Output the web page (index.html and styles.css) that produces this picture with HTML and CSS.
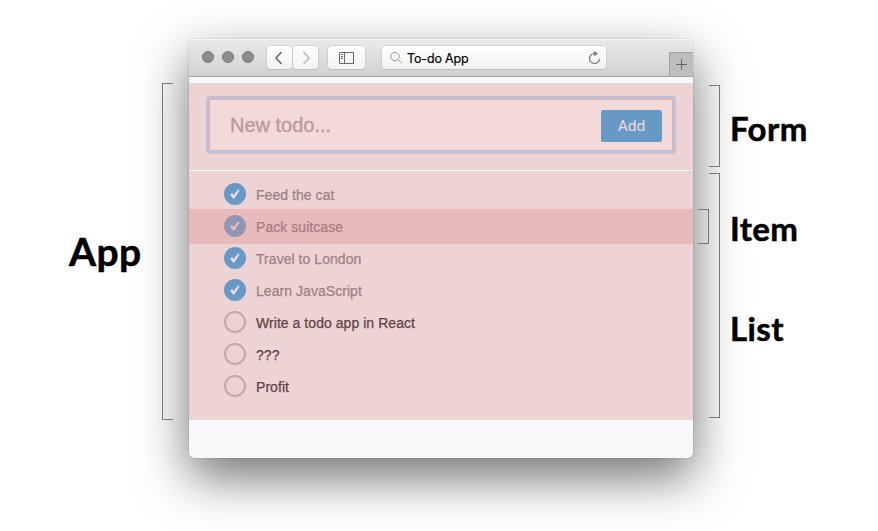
FILE: index.html
```html
<!DOCTYPE html>
<html lang="en">
<head>
<meta charset="utf-8">
<title>To-do App</title>
<link rel="stylesheet" href="styles.css">
</head>
<body>
<main class="figure">
  <div class="label label-app">App</div>
  <div class="bracket bracket-app"></div>
  <section class="window">
    <header class="toolbar">
      <div class="lights"><i></i><i></i><i></i></div>
      <div class="nav">
        <span class="btn back"><svg width="10" height="14" viewBox="0 0 10 14"><path d="M7.500 1 2 7l5.500 6"/></svg></span>
        <span class="btn forward"><svg width="10" height="14" viewBox="0 0 10 14"><path d="M2.500 1 8 7l-5.500 6"/></svg></span>
      </div>
      <span class="btn sidebar"><svg width="15" height="12" viewBox="0 0 15 12"><path d="M.5.5h14v11H.5zM5.500.5v11M2 2.500h2M2 4.500h2M2 6.500h2"/></svg></span>
      <div class="address">
        <svg class="search" width="13" height="13" viewBox="0 0 13 13"><circle cx="5" cy="5.500" r="4.200"/><path d="m8.200 8.700 3.600 3.600"/></svg>
        <span class="title">To-do App</span>
        <svg class="reload" width="13" height="14" viewBox="0 0 13 14"><path d="M6.500 2.500A5 5 0 1 0 11.500 7.800"/><path class="tip" d="M5.800 0v5.200L10 2.600z"/></svg>
      </div>
      <span class="newtab"><svg width="11" height="11" viewBox="0 0 11 11"><path d="M5.500 0v11M0 5.500h11"/></svg></span>
    </header>
    <div class="form">
      <div class="field"><span class="placeholder">New todo...</span><span class="add">Add</span></div>
    </div>
    <ul class="list">
      <li class="item done"><span class="check"><svg width="10" height="10" viewBox="0 0 10 10"><path d="M.2 5.200 2.200 4.200 3.600 6 7.800.8l1.900.2L4.600 9.200H2.400z"/></svg></span>Feed the cat</li>
      <li class="item done active"><span class="check"><svg width="10" height="10" viewBox="0 0 10 10"><path d="M.2 5.200 2.200 4.200 3.600 6 7.800.8l1.900.2L4.600 9.200H2.400z"/></svg></span>Pack suitcase</li>
      <li class="item done"><span class="check"><svg width="10" height="10" viewBox="0 0 10 10"><path d="M.2 5.200 2.200 4.200 3.600 6 7.800.8l1.900.2L4.600 9.200H2.400z"/></svg></span>Travel to London</li>
      <li class="item done"><span class="check"><svg width="10" height="10" viewBox="0 0 10 10"><path d="M.2 5.200 2.200 4.200 3.600 6 7.800.8l1.900.2L4.600 9.200H2.400z"/></svg></span>Learn JavaScript</li>
      <li class="item"><span class="check"></span>Write a todo app in React</li>
      <li class="item"><span class="check"></span>???</li>
      <li class="item"><span class="check"></span>Profit</li>
    </ul>
  </section>
  <div class="bracket bracket-item"></div>
  <div class="brackets">
    <div class="bracket bracket-form"></div>
    <div class="bracket bracket-list"></div>
  </div>
  <div class="labels">
    <div class="label label-form">Form</div>
    <div class="label label-item">Item</div>
    <div class="label label-list">List</div>
  </div>
</main>
</body>
</html>
```
FILE: styles.css
```css
* { box-sizing: border-box; }
body { margin: 0; background: #fff; overflow: hidden; }
svg { display: block; fill: none; stroke: #666; }

.figure {
  display: grid;
  grid-template-columns: 162px 11px 16px 504px 5px 11px 11px 10px 1fr;
  align-items: start;
  height: 531px;
}

.label { font: 700 33px/40px Lato, sans-serif; letter-spacing: .4px; color: #000; -webkit-text-stroke: .5px #000; }
.label-app { grid-column: 1; margin: 227px 0 0 69px; font-size: 39px; line-height: 48px; }
.labels { grid-column: 9; display: grid; gap: 60px; padding-top: 108px; }

.bracket { position: relative; z-index: 1; width: 11px; border: 1px solid #777; border-left: 0; }
.bracket-app { grid-column: 2; height: 337px; margin-top: 83px; border-left: 1px solid #777; border-right: 0; }
.bracket-item { grid-column: 6; height: 35px; margin-top: 209px; }
.brackets { grid-column: 7; display: grid; gap: 6px; margin-top: 85px; }
.bracket-form { height: 82px; }
.bracket-list { height: 245px; }

.window {
  grid-column: 4;
  height: 419px;
  margin-top: 39px;
  border-radius: 5px;
  background: #f6f8fa;
  box-shadow: 0 0 1px 0 rgba(0, 0, 0, .55), 0 19px 50px rgba(0, 0, 0, .56);
}

.toolbar {
  display: flex;
  height: 38px;
  padding: 7px 0 0 13px;
  border-bottom: 1px solid #a09fa1;
  border-radius: 5px 5px 0 0;
  background: linear-gradient(#ebe9eb, #d3d2d3);
  box-shadow: inset 0 1px #f6f5f6;
}
.lights { display: flex; gap: 8px; padding-top: 5px; }
.lights i { width: 12px; height: 12px; border: 1px solid #7b7a7f; border-radius: 50%; background: #8d8b91; }
.nav { display: flex; gap: 1px; margin-left: 13px; }
.btn {
  display: flex;
  align-items: center;
  justify-content: center;
  width: 25px;
  height: 23px;
  border-radius: 4px;
  background: linear-gradient(#fff, #f3f2f3);
  box-shadow: 0 0 0 .5px #c6c5c6, 0 1px 1px #b9b8b9;
}
.back svg { margin-right: 2px; stroke-width: 1.5; }
.forward svg { margin-left: 1px; stroke: #b8b8b8; stroke-width: 1.5; }
.sidebar { width: 37px; margin-left: 10px; }
.address {
  display: flex;
  align-items: center;
  width: 224px;
  height: 23px;
  margin-left: 17px;
  padding: 0 5px 0 8px;
  border-radius: 4px;
  background: linear-gradient(#fff, #f1f1f1);
  box-shadow: 0 0 0 .5px #c6c5c6, 0 1px 1px #b9b8b9;
}
.search { stroke: #999; }
.title { margin: 2px 0 0 4px; font: 400 12.5px/23px Inter, sans-serif; letter-spacing: -.15px; color: #000; -webkit-text-stroke: .2px #000; }
.reload { margin-left: auto; stroke: #777; stroke-width: 1.2; }
.tip { fill: #777; stroke: none; }
.newtab {
  display: flex;
  align-items: center;
  justify-content: center;
  width: 24px;
  height: 24px;
  margin: 6px 0 0 auto;
  border: 1px solid #a5a4a5;
  border-width: 1px 0 0 1px;
  background: #bfbebf;
}

.form { height: 87px; margin-top: 6px; padding: 13px 17px; background: #eed3d4; }
.field {
  display: flex;
  align-items: center;
  justify-content: space-between;
  height: 58px;
  padding: 2px 11px 0 21px;
  border: 3px solid #c5bfd5;
  border-radius: 4px;
  background: #f4d9da;
  box-shadow: inset 0 0 0 1px #d3b5bb;
}
.placeholder { margin-top: -2px; font: 20px/24px "Liberation Sans", sans-serif; color: #ba9c9d; -webkit-text-stroke: .4px #ba9c9d; }
.add {
  width: 61px;
  height: 32px;
  border-radius: 2px;
  background: #669ac5;
  font: 15.5px/33px Roboto, sans-serif;
  color: #efd9df;
  text-align: center;
}

.list { height: 249px; margin: 1px 0 0; padding: 6px 0 0; background: #eed3d4; list-style: none; }
.item {
  display: flex;
  align-items: center;
  gap: 10px;
  height: 35px;
  margin-bottom: -3px;
  padding: 2px 0 0 35px;
  font: 14px/33px "Liberation Sans", sans-serif;
  letter-spacing: .05px;
  color: #5b4447;
  -webkit-text-stroke: .25px currentColor;
}
.done { color: #9b8183; }
.active { background: #e8babc; color: #a87c7e; }
.check {
  display: flex;
  align-items: center;
  justify-content: center;
  width: 22px;
  height: 22px;
  margin-top: -4px;
  border: 2px solid #c5a7a9;
  border-radius: 50%;
}
.done .check { border: 0; background: #669ac5; }
.active .check { background: #9097b5; }
.check svg { fill: #f2dbe0; stroke: none; margin-top: 1px; }
.active .check svg { fill: #e8c0c4; }
```
